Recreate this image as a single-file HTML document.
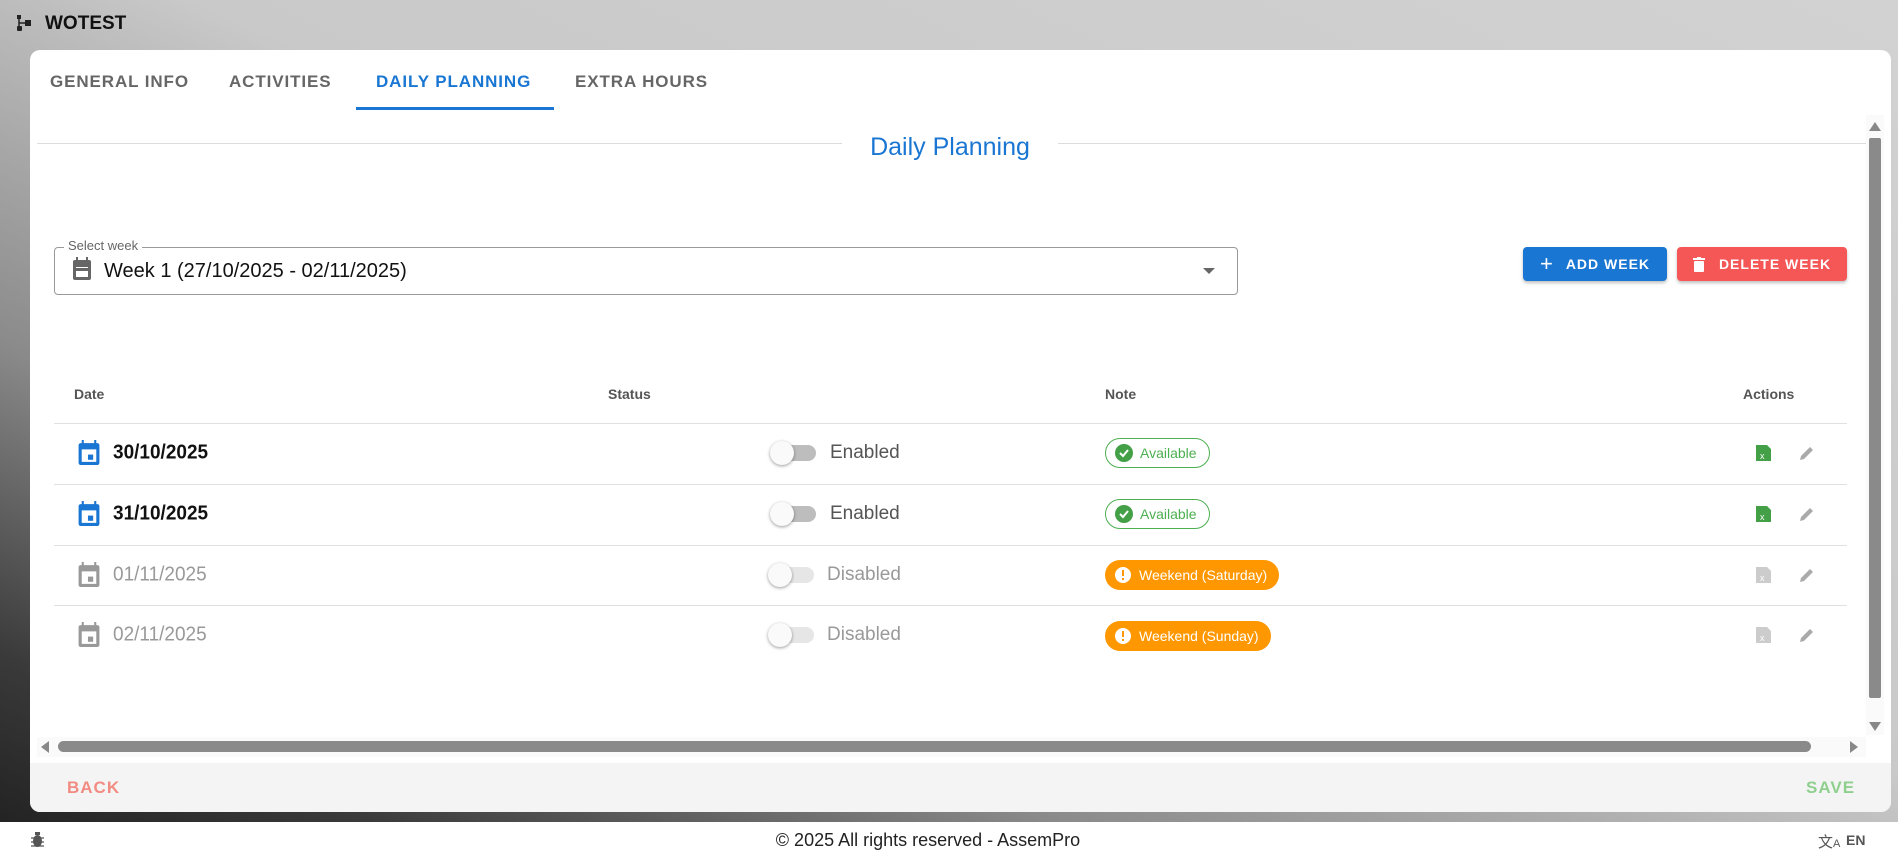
<!DOCTYPE html>
<html><head><meta charset="utf-8"><style>
*{box-sizing:border-box;margin:0;padding:0}
body{width:1898px;height:861px;overflow:hidden;font-family:"Liberation Sans",Arial,sans-serif;position:relative;
background:linear-gradient(to bottom left,#d2d2d2 0%,#c9c9c9 45%,#8a8a8a 70%,#3a3a3a 88%,#1e1e1e 100%);}
.abs{position:absolute}
.card{left:30px;top:50px;width:1861px;height:762px;background:#fff;border-radius:10px;overflow:hidden}
.tab{position:absolute;top:72px;font-size:17px;font-weight:bold;letter-spacing:0.9px;color:#666}
.th{position:absolute;top:386px;font-size:14px;font-weight:bold;color:#555}
.line{position:absolute;left:54px;width:1793px;height:1px;background:#e0e0e0}
.date{position:absolute;left:113px;font-size:19px;font-weight:bold;transform:scaleY(1.08)}
.tog{position:absolute;left:770px;width:50px;height:20px}
.tog .tr{position:absolute;left:8px;top:2px;width:38px;height:16px;border-radius:8px}
.tog .th2{position:absolute;left:0;top:-2px;width:24px;height:24px;border-radius:50%;background:#fafafa;box-shadow:0 1px 3px rgba(0,0,0,.4)}
.st{position:absolute;font-size:19px}
.chip{position:absolute;left:1105px;height:30px;border-radius:15px;font-size:14px;display:flex;align-items:center;padding-left:9px;padding-right:12px;gap:7px}
</style></head><body>
<div class="abs" style="left:16px;top:14px;width:16px;height:18px">
<svg width="16" height="18" viewBox="0 0 16 18"><rect x="1" y="1" width="4" height="4" fill="#222"/><rect x="1" y="12" width="5" height="5" rx="1" fill="#222"/><rect x="9" y="6" width="6" height="6" fill="#222"/><path d="M3 5v9M3 9h6" stroke="#222" stroke-width="1.5" fill="none"/></svg></div>
<div class="abs" style="left:45px;top:13px;font-size:19px;font-weight:bold;color:#111">WOTEST</div>

<div class="abs card"></div>
<div class="tab" style="left:50px">GENERAL INFO</div>
<div class="tab" style="left:229px">ACTIVITIES</div>
<div class="tab" style="left:376px;color:#1976d2">DAILY PLANNING</div>
<div class="tab" style="left:575px">EXTRA HOURS</div>
<div class="abs" style="left:356px;top:107px;width:198px;height:3px;background:#1976d2"></div>

<div class="abs" style="left:37px;top:143px;width:805px;height:1px;background:#ddd"></div>
<div class="abs" style="left:1058px;top:143px;width:808px;height:1px;background:#ddd"></div>
<div class="abs" style="left:842px;top:133px;width:216px;text-align:center;font-size:25px;color:#1976d2">Daily Planning</div>

<div class="abs" style="left:54px;top:247px;width:1184px;height:48px;border:1px solid #999;border-radius:4px"></div>
<div class="abs" style="left:64px;top:238px;background:#fff;padding:0 4px;font-size:13px;color:#666">Select week</div>
<svg class="abs" style="left:72px;top:257px" width="20" height="24" viewBox="0 0 20 24"><rect x="1" y="3" width="18" height="20" rx="2" fill="#666"/><rect x="4" y="10" width="12" height="10" fill="#fff"/><rect x="4" y="11" width="12" height="3" fill="#666"/><rect x="4" y="0" width="2" height="4" fill="#666"/><rect x="14" y="0" width="2" height="4" fill="#666"/></svg>
<div class="abs" style="left:104px;top:260px;font-size:20px;color:#111">Week 1 (27/10/2025 - 02/11/2025)</div>
<div class="abs" style="left:1203px;top:268px;width:0;height:0;border-left:6px solid transparent;border-right:6px solid transparent;border-top:6px solid #666"></div>

<div class="abs" style="left:1523px;top:247px;width:144px;height:34px;background:#1976d2;border-radius:4px;color:#fff;font-size:14px;font-weight:bold;letter-spacing:1px;display:flex;align-items:center;justify-content:center;gap:12px;box-shadow:0 2px 3px rgba(0,0,0,.25)"><span style="font-size:22px;font-weight:normal">+</span>ADD WEEK</div>
<div class="abs" style="left:1677px;top:247px;width:170px;height:34px;background:#f55656;border-radius:4px;color:#fff;font-size:14px;font-weight:bold;letter-spacing:1px;display:flex;align-items:center;justify-content:center;gap:14px;box-shadow:0 2px 3px rgba(0,0,0,.25)"><svg width="12" height="15" viewBox="0 0 12 15"><rect x="0" y="1" width="12" height="2" fill="#fff"/><rect x="4" y="0" width="4" height="2" fill="#fff"/><rect x="1" y="4" width="10" height="11" rx="1" fill="#fff"/></svg>DELETE WEEK</div>

<div class="th" style="left:74px">Date</div>
<div class="th" style="left:608px">Status</div>
<div class="th" style="left:1105px">Note</div>
<div class="th" style="left:1743px">Actions</div>
<div class="line" style="top:423px"></div>
<div class="line" style="top:484px"></div>
<div class="line" style="top:545px"></div>
<div class="line" style="top:605px"></div>

<svg class="abs" style="left:78px;top:440px" width="22" height="25" viewBox="0 0 20 24"><rect x="0" y="3" width="20" height="21" rx="2" fill="#1976d2"/><rect x="3" y="9" width="14" height="12" fill="#fff"/><rect x="9" y="14" width="5" height="5" fill="#1976d2"/><rect x="3" y="0" width="2" height="4" fill="#1976d2"/><rect x="15" y="0" width="2" height="4" fill="#1976d2"/></svg>
<div class="date" style="top:442px;color:#111">30/10/2025</div>
<svg class="abs" style="left:78px;top:501px" width="22" height="25" viewBox="0 0 20 24"><rect x="0" y="3" width="20" height="21" rx="2" fill="#1976d2"/><rect x="3" y="9" width="14" height="12" fill="#fff"/><rect x="9" y="14" width="5" height="5" fill="#1976d2"/><rect x="3" y="0" width="2" height="4" fill="#1976d2"/><rect x="15" y="0" width="2" height="4" fill="#1976d2"/></svg>
<div class="date" style="top:503px;color:#111">31/10/2025</div>
<svg class="abs" style="left:78px;top:562px" width="22" height="25" viewBox="0 0 20 24"><rect x="0" y="3" width="20" height="21" rx="2" fill="#999"/><rect x="3" y="9" width="14" height="12" fill="#fff"/><rect x="9" y="14" width="5" height="5" fill="#999"/><rect x="3" y="0" width="2" height="4" fill="#999"/><rect x="15" y="0" width="2" height="4" fill="#999"/></svg>
<div class="date" style="top:564px;color:#999;font-weight:normal">01/11/2025</div>
<svg class="abs" style="left:78px;top:622px" width="22" height="25" viewBox="0 0 20 24"><rect x="0" y="3" width="20" height="21" rx="2" fill="#999"/><rect x="3" y="9" width="14" height="12" fill="#fff"/><rect x="9" y="14" width="5" height="5" fill="#999"/><rect x="3" y="0" width="2" height="4" fill="#999"/><rect x="15" y="0" width="2" height="4" fill="#999"/></svg>
<div class="date" style="top:624px;color:#999;font-weight:normal">02/11/2025</div>

<div class="tog" style="top:443px"><div class="tr" style="background:#bdbdbd"></div><div class="th2"></div></div>
<div class="st" style="left:830px;top:442px;color:#555">Enabled</div>
<div class="tog" style="top:504px"><div class="tr" style="background:#bdbdbd"></div><div class="th2"></div></div>
<div class="st" style="left:830px;top:503px;color:#555">Enabled</div>
<div class="tog" style="top:565px;left:768px"><div class="tr" style="background:#e6e6e6"></div><div class="th2"></div></div>
<div class="st" style="left:827px;top:564px;color:#999">Disabled</div>
<div class="tog" style="top:625px;left:768px"><div class="tr" style="background:#e6e6e6"></div><div class="th2"></div></div>
<div class="st" style="left:827px;top:624px;color:#999">Disabled</div>

<div class="chip" style="top:438px;border:1px solid #4caf50;color:#4caf50"><svg width="18" height="18"><circle cx="9" cy="9" r="9" fill="#43a047"/><path d="M5 9l3 3 5-6" stroke="#fff" stroke-width="2" fill="none"/></svg>Available</div>
<div class="chip" style="top:499px;border:1px solid #4caf50;color:#4caf50"><svg width="18" height="18"><circle cx="9" cy="9" r="9" fill="#43a047"/><path d="M5 9l3 3 5-6" stroke="#fff" stroke-width="2" fill="none"/></svg>Available</div>
<div class="chip" style="top:560px;background:#ff9800;color:#fff"><svg width="18" height="18"><circle cx="9" cy="9" r="8" fill="#fff"/><rect x="8" y="4" width="2" height="6" fill="#ff9800"/><rect x="8" y="12" width="2" height="2" fill="#ff9800"/></svg>Weekend (Saturday)</div>
<div class="chip" style="top:621px;background:#ff9800;color:#fff"><svg width="18" height="18"><circle cx="9" cy="9" r="8" fill="#fff"/><rect x="8" y="4" width="2" height="6" fill="#ff9800"/><rect x="8" y="12" width="2" height="2" fill="#ff9800"/></svg>Weekend (Sunday)</div>

<svg class="abs" style="left:1756px;top:444px" width="15" height="18" viewBox="0 0 15 18"><path d="M0 1v16h15V5l-4-4z" fill="#43a047"/><text x="4" y="15" font-size="9" fill="#fff" font-family="Liberation Sans">x</text></svg>
<svg class="abs" style="left:1800px;top:445px" width="15" height="15" viewBox="0 0 15 15"><path d="M0 15l1-4 9-9 3 3-9 9z" fill="#aaa"/></svg>
<svg class="abs" style="left:1756px;top:505px" width="15" height="18" viewBox="0 0 15 18"><path d="M0 1v16h15V5l-4-4z" fill="#43a047"/><text x="4" y="15" font-size="9" fill="#fff" font-family="Liberation Sans">x</text></svg>
<svg class="abs" style="left:1800px;top:506px" width="15" height="15" viewBox="0 0 15 15"><path d="M0 15l1-4 9-9 3 3-9 9z" fill="#aaa"/></svg>
<svg class="abs" style="left:1756px;top:566px" width="15" height="18" viewBox="0 0 15 18"><path d="M0 1v16h15V5l-4-4z" fill="#ccc"/><text x="4" y="15" font-size="9" fill="#fff" font-family="Liberation Sans">x</text></svg>
<svg class="abs" style="left:1800px;top:567px" width="15" height="15" viewBox="0 0 15 15"><path d="M0 15l1-4 9-9 3 3-9 9z" fill="#aaa"/></svg>
<svg class="abs" style="left:1756px;top:626px" width="15" height="18" viewBox="0 0 15 18"><path d="M0 1v16h15V5l-4-4z" fill="#ccc"/><text x="4" y="15" font-size="9" fill="#fff" font-family="Liberation Sans">x</text></svg>
<svg class="abs" style="left:1800px;top:627px" width="15" height="15" viewBox="0 0 15 15"><path d="M0 15l1-4 9-9 3 3-9 9z" fill="#aaa"/></svg>

<div class="abs" style="left:1866px;top:115px;width:18px;height:620px;background:#fafafa"></div>
<div class="abs" style="left:1869px;top:122px;width:0;height:0;border-left:6px solid transparent;border-right:6px solid transparent;border-bottom:9px solid #888"></div>
<div class="abs" style="left:1869px;top:138px;width:12px;height:560px;background:#8a8a8a;border-radius:2px"></div>
<div class="abs" style="left:1869px;top:722px;width:0;height:0;border-left:6px solid transparent;border-right:6px solid transparent;border-top:9px solid #888"></div>
<div class="abs" style="left:37px;top:737px;width:1829px;height:20px;background:#fafafa"></div>
<div class="abs" style="left:41px;top:741px;width:0;height:0;border-top:6px solid transparent;border-bottom:6px solid transparent;border-right:8px solid #888"></div>
<div class="abs" style="left:58px;top:741px;width:1753px;height:11px;background:#8a8a8a;border-radius:6px"></div>
<div class="abs" style="left:1850px;top:741px;width:0;height:0;border-top:6px solid transparent;border-bottom:6px solid transparent;border-left:8px solid #888"></div>

<div class="abs" style="left:30px;top:763px;width:1861px;height:49px;background:#f4f4f4;border-radius:0 0 10px 10px"></div>
<div class="abs" style="left:67px;top:778px;font-size:17px;font-weight:bold;letter-spacing:1px;color:#f28b82">BACK</div>
<div class="abs" style="left:1806px;top:778px;font-size:17px;font-weight:bold;letter-spacing:1px;color:#8fd08f">SAVE</div>

<div class="abs" style="left:0;top:822px;width:1898px;height:39px;background:#fff"></div>
<svg class="abs" style="left:31px;top:832px" width="13" height="16" viewBox="0 0 13 16"><ellipse cx="6.5" cy="9" rx="4.5" ry="6" fill="#555"/><path d="M0 6h13M0 10h13M0 14h13" stroke="#555" stroke-width="1.3"/><rect x="4" y="0" width="5" height="3" fill="#555"/></svg>
<div class="abs" style="left:0;top:830px;width:1898px;text-align:center;font-size:18px;color:#222"><span style="position:relative;left:-21px">© 2025 All rights reserved - AssemPro</span></div>
<div class="abs" style="left:1818px;top:831px;font-size:15px;color:#555">文<span style="font-size:11px">A</span></div>
<div class="abs" style="left:1846px;top:832px;font-size:14px;font-weight:bold;color:#555">EN</div>
</body></html>
